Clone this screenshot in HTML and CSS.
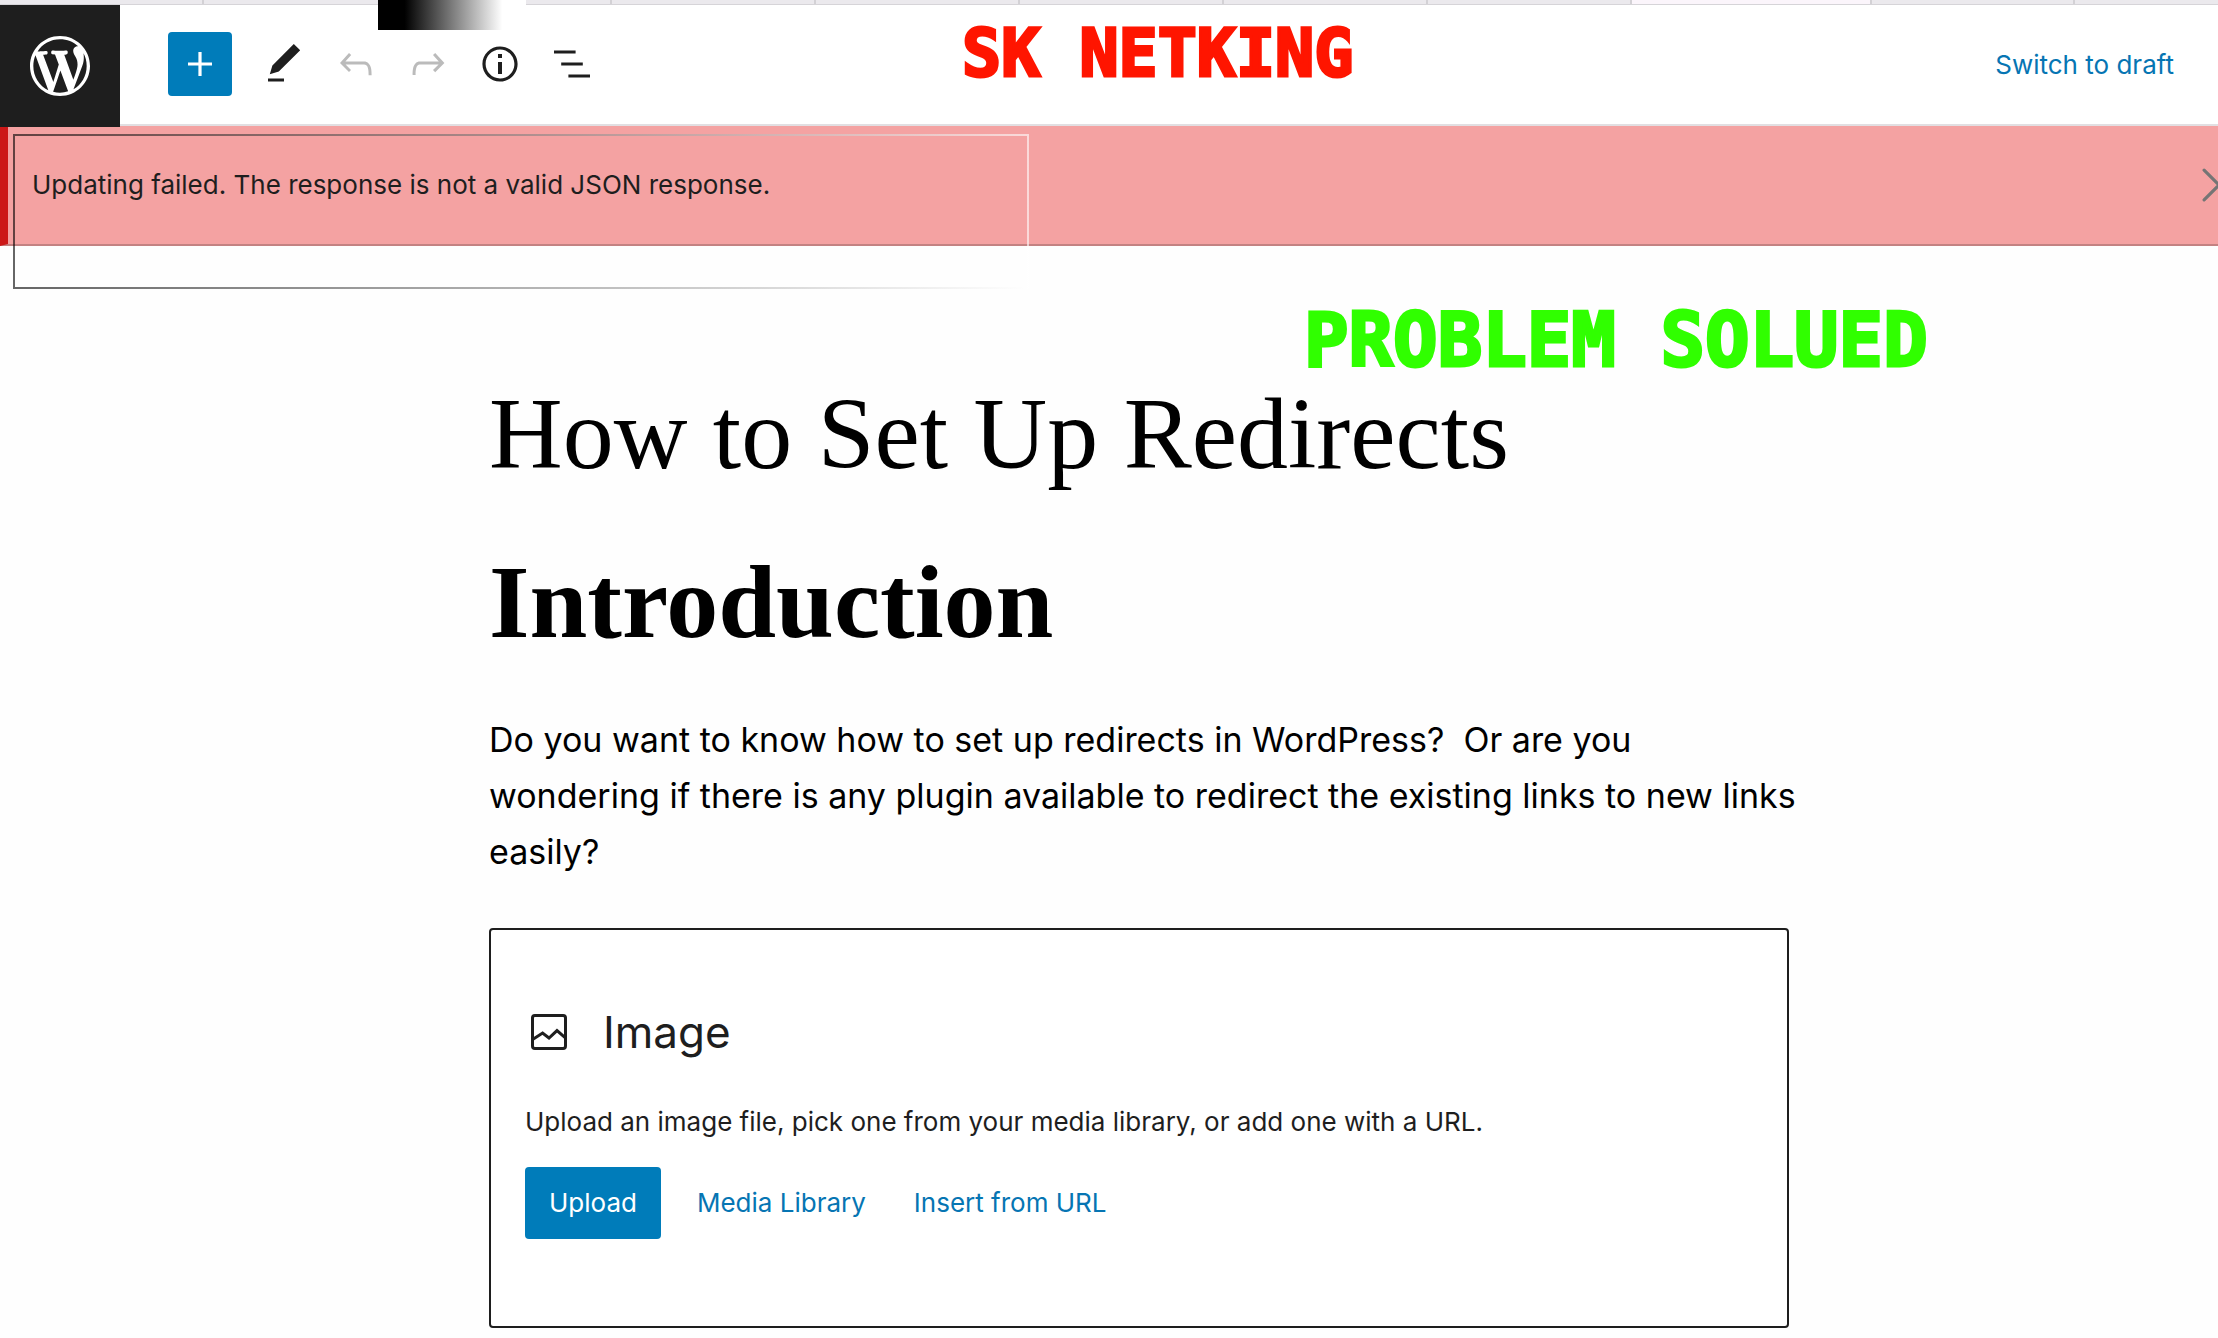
FILE: index.html
```html
<!DOCTYPE html>
<html lang="en">
<head>
<meta charset="utf-8">
<title>Edit Post</title>
<link rel="stylesheet" href="styles.css">
</head>
<body>
<div class="tabs" aria-hidden="true">
  <span class="tab"></span><span class="tab"></span><span class="tab"></span><span class="tab"></span><span class="tab"></span><span class="tab"></span><span class="tab"></span><span class="tab"></span><span class="tab tab-active"></span><span class="tab"></span><span class="tab tab-last"></span>
</div>
<header class="header">
  <a class="logo" href="#" aria-label="View posts">
    <svg viewBox="-2 -2 24 24"><path d="M20 10c0-5.51-4.49-10-10-10C4.48 0 0 4.49 0 10c0 5.52 4.48 10 10 10 5.51 0 10-4.48 10-10zM7.78 15.37L4.37 6.22c.55-.02 1.17-.08 1.17-.08.5-.06.44-1.13-.06-1.11 0 0-1.45.11-2.37.11-.18 0-.37 0-.58-.01C4.12 2.69 6.87 1.11 10 1.11c2.33 0 4.45.87 6.05 2.34-.68-.11-1.65.39-1.65 1.58 0 .74.45 1.36.9 2.1.35.61.55 1.36.55 2.46 0 1.49-1.4 5-1.4 5l-3.03-8.37c.54-.02.82-.17.82-.17.5-.05.44-1.25-.06-1.22 0 0-1.44.12-2.38.12-.87 0-2.33-.12-2.33-.12-.5-.03-.56 1.2-.06 1.22l.92.08 1.26 3.41zM17.41 10c.24-.64.74-1.87.43-4.25.7 1.29 1.05 2.71 1.05 4.25 0 3.29-1.73 6.24-4.4 7.78.97-2.59 1.94-5.2 2.92-7.78zM6.1 18.09C3.12 16.65 1.11 13.53 1.11 10c0-1.3.23-2.48.72-3.59C3.25 10.3 4.67 14.2 6.1 18.09zm4.03-6.63l2.58 6.98c-.86.29-1.76.45-2.71.45-.79 0-1.57-.11-2.29-.33.81-2.38 1.62-4.74 2.42-7.1z"/></svg>
  </a>
  <div class="tools">
    <button class="tool tool-add" type="button" aria-label="Add block"><svg viewBox="0 0 24 24"><path d="M18 11.2h-5.2V6h-1.6v5.2H6v1.6h5.2V18h1.6v-5.2H18z"/></svg></button>
    <button class="tool" type="button" aria-label="Edit"><svg viewBox="0 0 24 24"><path d="M20.1 5.1L16.9 2 6.2 12.7l-1.3 4.4 4.5-1.3L20.1 5.1zM4 20.8h8v-1.5H4v1.5z"/></svg></button>
    <button class="tool" type="button" aria-label="Undo" disabled><svg viewBox="0 0 24 24"><path d="M18.3 11.7c-.6-.6-1.4-.9-2.3-.9H6.7l2.9-3.3-1.1-1-4.5 5L8.5 16l1-1-2.7-2.7H16c.5 0 .9.2 1.3.5 1 1 1 3.4 1 4.5v.3h1.5v-.2c0-1.5 0-4.3-1.5-5.7z"/></svg></button>
    <button class="tool" type="button" aria-label="Redo" disabled><svg viewBox="0 0 24 24"><path d="M15.6 6.5l-1.1 1 2.9 3.3H8c-.9 0-1.7.3-2.3.9-1.4 1.5-1.4 4.2-1.4 5.6v.2h1.5v-.3c0-1.1 0-3.5 1-4.5.3-.3.7-.5 1.3-.5h9.2L14.5 15l1.1 1.1 4.6-4.6-4.6-5z"/></svg></button>
    <button class="tool" type="button" aria-label="Details"><svg viewBox="0 0 24 24"><path d="M12 3.2c-4.8 0-8.8 3.9-8.8 8.8 0 4.8 3.9 8.8 8.8 8.8 4.8 0 8.8-3.9 8.8-8.8 0-4.8-4-8.8-8.8-8.8zm0 16c-4 0-7.2-3.3-7.2-7.2C4.8 8 8 4.8 12 4.8s7.2 3.3 7.2 7.2c0 4-3.2 7.2-7.2 7.2zM11 17h2v-6h-2v6zm0-8h2V7h-2v2z"/></svg></button>
    <button class="tool" type="button" aria-label="List view"><svg viewBox="0 0 24 24"><path d="M13.8 5.2H3v1.5h10.8V5.2zm-3.6 12v1.5H21v-1.5H10.2zm7.2-6H6.6v1.5h10.8v-1.5z"/></svg></button>
  </div>
  <button class="link-button draft" type="button">Switch to draft</button>
</header>
<div class="notice" role="alert">
  <p class="notice-text">Updating failed. The response is not a valid JSON response.</p>
  <button class="dismiss" type="button" aria-label="Dismiss"><svg viewBox="0 0 32 32"><path d="M2 2l28 28M30 2L2 30"/></svg></button>
</div>
<main class="editor">
  <h1 class="title">How to Set Up Redirects</h1>
  <h2 class="heading">Introduction</h2>
  <p class="paragraph">Do you want to know how to set up redirects in WordPress?&nbsp; Or are you wondering if there is any plugin available to redirect the existing links to new links easily?</p>
  <section class="placeholder">
    <h3 class="placeholder-label">
      <svg viewBox="0 0 24 24"><rect x="3.75" y="3.75" width="16.5" height="16.5" rx="1.2"/><path d="M3.8 15.7L8.8 12.5L12 15L16 11.3L20.2 14.9"/></svg>
      Image
    </h3>
    <p class="placeholder-text">Upload an image file, pick one from your media library, or add one with a URL.</p>
    <div class="actions">
      <button class="upload" type="button">Upload</button>
      <button class="link-button" type="button">Media Library</button>
      <button class="link-button" type="button">Insert from URL</button>
    </div>
  </section>
</main>
<div class="fade-block"></div>
<div class="fade-frame"></div>
<div class="stamp stamp-red">SK NETKING</div>
<div class="stamp stamp-green">PROBLEM SOLUED</div>
</body>
</html>
```
FILE: styles.css
```css
* {
  box-sizing: border-box;
}

body {
  margin: 0;
  position: relative;
  background: #fefefe;
  color: #1e1e1e;
  font: 26px/36px Inter, "Liberation Sans", sans-serif;
  overflow-x: hidden;
}

h1, h2, h3, p {
  margin: 0;
}

button {
  border: 0;
  padding: 0;
  background: none;
  color: inherit;
  font: inherit;
}

svg {
  display: block;
  fill: currentColor;
}

.tabs {
  display: flex;
  height: 5px;
  background: #ebe9ed;
  border-bottom: 1px solid #d6d4d8;
}

.tab {
  flex: 204;
  border-right: 2px solid #d3d1d5;
}

.tab-active {
  flex: 240;
  background: #fbf5fb;
}

.tab-last {
  flex: 144;
  border-right: 0;
}

.header {
  display: flex;
  align-items: center;
  height: 121px;
  padding-right: 44px;
  background: #fff;
  border-bottom: 2px solid #e2dfe2;
}

.logo {
  display: grid;
  place-items: center;
  width: 120px;
  height: 122px;
  margin-bottom: -2px;
  background: #1e1e1e;
  color: #fff;
}

.logo svg {
  width: 72px;
}

.tools {
  display: flex;
  align-items: center;
  gap: 24px;
  padding: 0 0 2px 48px;
}

.tool svg {
  width: 48px;
}

.tool:disabled {
  color: #bbb;
}

.tool-add {
  padding: 8px;
  margin-right: 4px;
  border-radius: 4px;
  background: #007cba;
  color: #fff;
}

.link-button {
  color: #0675b3;
}

.draft {
  margin-left: auto;
}

.notice {
  display: flex;
  align-items: center;
  justify-content: space-between;
  height: 120px;
  padding-left: 24px;
  background: #f4a2a2;
  border-left: 8px solid #cc1818;
  border-bottom: 2px solid #c38282;
  overflow: hidden;
}

.dismiss {
  flex: none;
  margin-right: -18px;
  color: #757575;
}

.dismiss svg {
  width: 34px;
  stroke: currentColor;
  stroke-width: 3;
  stroke-linecap: round;
}

.editor {
  width: 1360px;
  max-width: 100%;
  margin: 0 auto;
  padding: 128px 0 10px 60px;
}

.title,
.heading {
  color: #000;
  font-family: "Liberation Serif", serif;
  font-size: 104px;
  line-height: 120px;
}

.title {
  font-size: 102px;
  font-weight: 400;
}

.heading {
  margin-top: 48px;
}

.paragraph {
  margin-top: 50px;
  margin-right: -8px;
  color: #000;
  font-size: 34px;
  line-height: 56px;
}

.placeholder {
  margin-top: 48px;
  height: 400px;
  padding: 72px 34px;
  background: #fff;
  border: 2px solid #1e1e1e;
  border-radius: 4px;
}

.placeholder-label {
  display: flex;
  align-items: center;
  gap: 30px;
  font-size: 44px;
  font-weight: 400;
  line-height: 60px;
}

.placeholder-label svg {
  width: 48px;
  fill: none;
  stroke: currentColor;
  stroke-width: 1.5;
}

.placeholder-text {
  margin-top: 42px;
}

.actions {
  display: flex;
  gap: 48px;
  margin-top: 27px;
}

.upload {
  height: 72px;
  margin-right: -12px;
  padding: 0 24px;
  border-radius: 4px;
  background: #007cba;
  color: #fff;
}

.fade-block {
  position: absolute;
  top: 0;
  left: 378px;
  width: 148px;
  height: 30px;
  background: linear-gradient(to right, #000 18%, #fff 84%);
}

.fade-frame {
  position: absolute;
  top: 134px;
  left: 13px;
  width: 1016px;
  height: 155px;
  border: 2px solid;
  border-image: linear-gradient(to right, rgba(0, 0, 0, .6), rgba(255, 255, 255, .6)) 2;
}

.stamp {
  position: absolute;
  font-family: "DejaVu Sans Mono", monospace;
  font-weight: 700;
  line-height: 80px;
  white-space: pre;
  -webkit-text-stroke: 3px currentColor;
}

.stamp-red {
  top: 14px;
  left: 962px;
  color: #ff1500;
  font-size: 65px;
}

.stamp-green {
  top: 300px;
  left: 1304px;
  color: #30ff00;
  font-size: 74px;
}
```
